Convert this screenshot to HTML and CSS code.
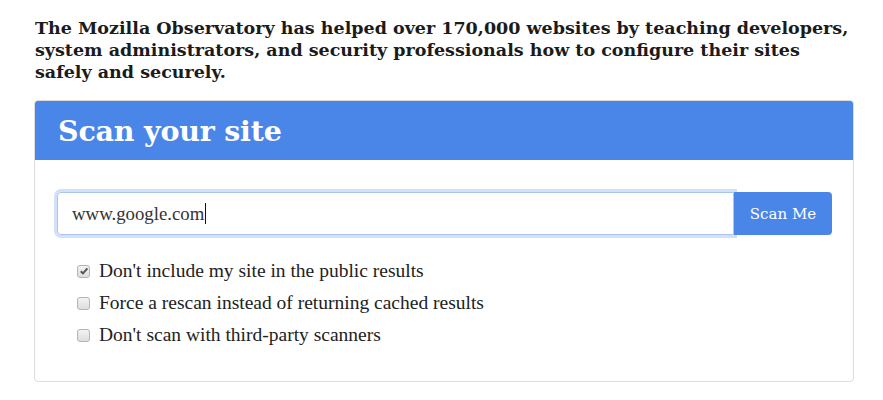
FILE: index.html
```html
<!DOCTYPE html>
<html>
<head>
<meta charset="utf-8">
<link rel="stylesheet" href="styles.css">
</head>
<body>
<div class="page">
  <p class="intro">The Mozilla Observatory has helped over 170,000 websites by teaching developers, system administrators, and security professionals how to configure their sites safely and securely.</p>
  <div class="panel">
    <div class="panel-head"><h1 class="title">Scan your site</h1></div>
    <div class="panel-body">
      <div class="scan-row">
        <div class="input"><span class="input-text">www.google.com</span><span class="caret"></span></div>
        <button class="btn">Scan Me</button>
      </div>
      <ul class="opts">
        <li class="opt"><span class="cb checked"><svg width="10" height="10" viewBox="0 0 10 10"><path d="M1.8 5.2 L4 7.4 L8.4 2.4" fill="none" stroke="#555" stroke-width="2"/></svg></span><span>Don't include my site in the public results</span></li>
        <li class="opt"><span class="cb"></span><span>Force a rescan instead of returning cached results</span></li>
        <li class="opt"><span class="cb"></span><span>Don't scan with third-party scanners</span></li>
      </ul>
    </div>
  </div>
</div>
</body>
</html>
```
FILE: styles.css
```css
html, body { margin: 0; padding: 0; background: #fff; }
.page { padding: 17px 29px 0 34px; }
.intro {
  margin: 0 0 17px 1px;
  font-family: "DejaVu Serif", serif;
  font-stretch: normal;
  font-weight: bold;
  font-size: 17.5px;
  line-height: 22px;
  color: #1b1b1b;
  width: 815px;
}
.panel {
  width: 818px;
  border: 1px solid #ddd;
  border-radius: 4px;
  overflow: hidden;
}
.panel-head {
  background: #4a86e8;
  height: 59px;
  padding-left: 23px;
  display: flex;
  align-items: center;
}
.title {
  margin: 0;
  font-family: "DejaVu Serif", serif;
  font-stretch: normal;
  font-weight: bold;
  font-size: 28.5px;
  color: #fff;
  letter-spacing: -0.2px;
}
.panel-body { padding: 32px 21px 30px 22px; }
.scan-row { display: flex; height: 43px; }
.input {
  flex: 1;
  box-sizing: border-box;
  border: 1px solid #a9c4f0;
  border-radius: 4px 0 0 4px;
  box-shadow: 0 0 0 3px #d3e1f8;
  display: flex;
  align-items: center;
  padding-left: 14px;
  font-family: "Liberation Serif", serif;
  font-size: 18.8px;
  color: #333;
}
.caret { display: inline-block; width: 1px; height: 21px; background: #111; margin-left: 1px; }
.btn {
  width: 98px;
  border: 0;
  background: #4a86e8;
  color: #fff;
  border-radius: 0 4px 4px 0;
  font-family: "DejaVu Serif", serif;
  font-size: 15px;
  padding: 0;
}
.opts { list-style: none; margin: 20px 0 0 20px; padding: 0; }
.opt {
  display: flex;
  align-items: center;
  height: 32px;
  font-family: "Liberation Serif", serif;
  font-size: 19.5px;
  color: #222;
}
.cb {
  width: 11px;
  height: 11px;
  border: 1px solid #b4b4b4;
  border-radius: 3px;
  background: linear-gradient(#f3f3f3, #dedede);
  margin-right: 9px;
  display: flex;
  align-items: center;
  justify-content: center;
}
```
